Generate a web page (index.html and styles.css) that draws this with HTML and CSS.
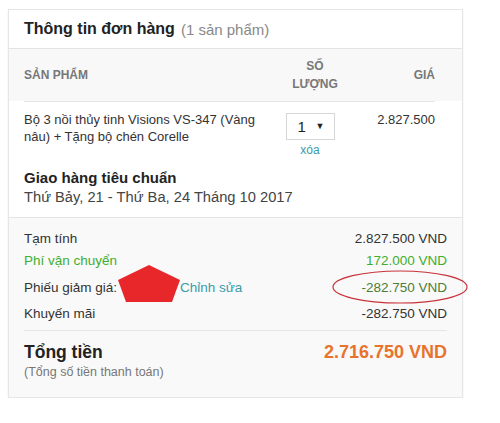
FILE: index.html
```html
<!DOCTYPE html>
<html lang="vi">
<head>
<meta charset="utf-8">
<link rel="stylesheet" href="styles.css">
</head>
<body>
<div class="card">
  <div class="card-head">
    <span class="title">Thông tin đơn hàng</span>
    <span class="count">(1 sản phẩm)</span>
  </div>
  <div class="thead">
    <div class="th th-name">SẢN PHẨM</div>
    <div class="th th-qty">SỐ<br>LƯỢNG</div>
    <div class="th th-price">GIÁ</div>
  </div>
  <div class="table">
    <div class="row">
      <div class="name">Bộ 3 nồi thủy tinh Visions VS-347 (Vàng nâu) + Tặng bộ chén Corelle</div>
      <div class="qty">
        <div class="select"><span>1</span><span class="caret">▼</span></div>
        <a class="link">xóa</a>
      </div>
      <div class="price">2.827.500</div>
    </div>
    <div class="ship">
      <div class="ship-title">Giao hàng tiêu chuẩn</div>
      <div class="ship-date">Thứ Bảy, 21 - Thứ Ba, 24 Tháng 10 2017</div>
    </div>
  </div>
  <div class="summary">
    <div class="line"><span>Tạm tính</span><span>2.827.500 VND</span></div>
    <div class="line green"><span>Phí vận chuyển</span><span>172.000 VND</span></div>
    <div class="line coupon">
      <span class="coupon-label">Phiếu giảm giá: <span class="blot"></span><a class="link edit">Chỉnh sửa</a></span>
      <span class="olive">-282.750 VND</span>
    </div>
    <div class="line last"><span>Khuyến mãi</span><span>-282.750 VND</span></div>
    <div class="total">
      <div>
        <div class="total-label">Tổng tiền</div>
        <div class="total-sub">(Tổng số tiền thanh toán)</div>
      </div>
      <div class="total-value">2.716.750 VND</div>
    </div>
  </div>
  <svg class="pentagon" width="64" height="39" viewBox="0 0 64 39"><polygon points="32,1 63,16 55,38 9,38 1,16" fill="#e8272b"/></svg>
  <svg class="ring" width="138" height="36" viewBox="0 0 138 36"><ellipse cx="69" cy="18" rx="67" ry="16" fill="none" stroke="#c9323a" stroke-width="1.2"/></svg>
</div>
</body>
</html>
```

FILE: styles.css
```css
* { box-sizing: border-box; }
body {
  margin: 0;
  background: #fff;
  font-family: "Liberation Sans", Arial, sans-serif;
  color: #333;
}
.card {
  position: relative;
  margin: 9px 0 0 8px;
  width: 455px;
  border: 1px solid #e6e6e6;
  box-shadow: 0 1px 2px rgba(0,0,0,0.08);
  background: #fff;
}
.card-head {
  height: 39px;
  padding: 0 15px;
  display: flex;
  align-items: center;
  gap: 6px;
  border-bottom: 1px solid #e4e4e4;
}
.title { font-size: 16px; font-weight: bold; color: #222; }
.count { font-size: 15px; color: #888; }
.thead {
  padding: 0 27px 0 15px;
  background: #f8f8f8;
  height: 52px;
  display: flex;
  align-items: center;
}
.th { font-size: 12px; font-weight: bold; color: #777; }
.th-name { flex: 1; }
.th-qty { width: 86px; text-align: center; line-height: 18px; }
.th-price { width: 77px; text-align: right; }
.table { padding: 0 27px 0 15px; }
.row {
  display: flex;
  padding-top: 9px;
  border-top: 1px solid #e6e6e6;
  font-size: 13px;
  line-height: 17px;
}
.name { flex: 1; padding-right: 6px; }
.qty {
  width: 76px;
  display: flex;
  flex-direction: column;
  align-items: center;
}
.select {
  margin-top: 2px;
  width: 49px;
  height: 27px;
  border: 1px solid #d6d6d6;
  display: flex;
  align-items: center;
  justify-content: space-between;
  padding: 0 9px 0 11px;
  font-size: 15px;
  color: #222;
}
.caret { font-size: 9px; }
.link { color: #3a9bab; text-decoration: none; }
.qty .link { font-size: 12px; line-height: 20px; }
.price { width: 87px; text-align: right; }
.ship { padding: 8px 0 9px; }
.ship-title { font-size: 15px; font-weight: bold; color: #222; line-height: 19px; }
.ship-date { font-size: 14.7px; color: #444; line-height: 21px; }
.summary {
  background: #f9f9f9;
  border-top: 1px solid #e4e4e4;
  padding: 10px 15px 0 15px;
  font-size: 13.5px;
}
.line {
  display: flex;
  justify-content: space-between;
  align-items: center;
  height: 21px;
}
.line.green { color: #3fae2e; height: 22px; }
.line.coupon { height: 33px; }
.line.last { height: 19px; }
.coupon-label { display: flex; align-items: center; }
.blot { display: inline-block; width: 63px; }
.olive { color: #4e7d34; }
.total {
  margin-top: 7px;
  border-top: 1px solid #e6e6e6;
  padding: 10px 0 16px;
  display: flex;
  justify-content: space-between;
  align-items: flex-start;
}
.total-label { font-size: 17.5px; font-weight: bold; color: #222; line-height: 22px; }
.total-sub { font-size: 12.5px; color: #777; line-height: 18px; }
.total-value { font-size: 18px; font-weight: bold; color: #e7732c; line-height: 22px; }
.pentagon { position: absolute; left: 108px; top: 254px; }
.ring { position: absolute; left: 322px; top: 259px; }
```
